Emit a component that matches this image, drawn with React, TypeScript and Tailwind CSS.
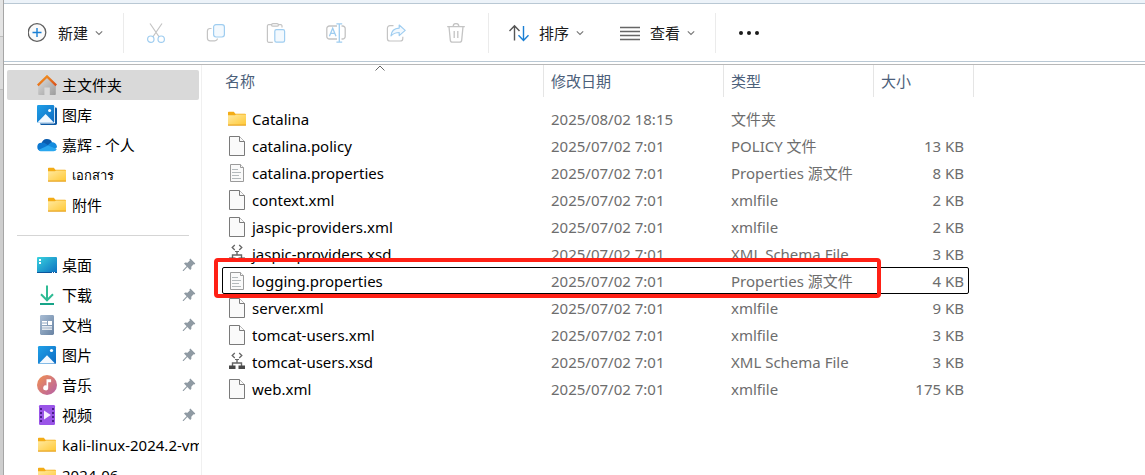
import type { ReactNode } from "react";

const Chevron = () => (
  <svg className="w-2 h-2 shrink-0" viewBox="0 0 8 8" fill="none" stroke="#777" strokeWidth="1.1">
    <path d="M0.8 2.3 4 5.5 7.2 2.3" />
  </svg>
);

const NewIcon = () => (
  <svg className="w-5 h-5 shrink-0" viewBox="0 0 20 20" fill="none">
    <circle cx="9" cy="9.5" r="8.8" fill="#fafafa" stroke="#5f5f5f" strokeWidth="1.3" />
    <path d="M9 5v9M4.5 9.5h9" stroke="#1a7fd4" strokeWidth="1.4" />
  </svg>
);

const CutIcon = () => (
  <svg className="w-5 h-5" viewBox="0 0 20 20" fill="none" strokeWidth="1.2">
    <path d="M4 0.5 13.2 14M16 0.5 6.8 14" stroke="#c4c4c4" />
    <circle cx="4.8" cy="16.2" r="3.2" stroke="#9fcdf0" />
    <circle cx="15.2" cy="16.2" r="3.2" stroke="#9fcdf0" />
  </svg>
);

const CopyIcon = () => (
  <svg className="w-5 h-5" viewBox="0 0 20 20" fill="none" strokeWidth="1.2">
    <path d="M5.5 5.5H4A2.6 2.6 0 0 0 1.4 8v7A2.8 2.8 0 0 0 4.2 17.8h4.6a2.8 2.8 0 0 0 2.7-2.3" stroke="#c4c4c4" />
    <rect x="7.6" y="1.6" width="10.8" height="12.4" rx="2.4" fill="#f3f9fe" stroke="#9fcdf0" />
  </svg>
);

const PasteIcon = () => (
  <svg className="w-5 h-5" viewBox="0 0 20 20" fill="none" strokeWidth="1.2">
    <path d="M6 1.7H2.6A1.2 1.2 0 0 0 1.4 3v15a1.3 1.3 0 0 0 1.2 1.3h4.2M12 1.7h2.8A1.2 1.2 0 0 1 16 3v1.4" stroke="#c4c4c4" />
    <rect x="5.6" y="0.6" width="6.8" height="2.6" rx="1.3" stroke="#c4c4c4" />
    <rect x="8.8" y="6.6" width="9.8" height="12.6" rx="1.6" fill="#f3f9fe" stroke="#9fcdf0" />
  </svg>
);

const RenameIcon = () => (
  <svg className="w-5 h-5" viewBox="0 0 20 20" fill="none" strokeWidth="1.3">
    <path d="M11 3H3.4A2.6 2.6 0 0 0 0.8 5.6v7.8A2.6 2.6 0 0 0 3.4 16H11M15.5 3h1.1a2.6 2.6 0 0 1 2.6 2.6v7.8a2.6 2.6 0 0 1-2.6 2.6h-1.1" stroke="#c4c4c4" />
    <path d="m3.4 13.2 3.3-8 3.3 8M4.7 10.4h4.1M13.3 0.8v18.4M10.4 0.8h5.8M10.4 19.2h5.8" stroke="#9fcdf0" />
  </svg>
);

const ShareIcon = () => (
  <svg className="w-5 h-5" viewBox="0 0 20 20" fill="none" strokeWidth="1.2" strokeLinejoin="round">
    <path d="M7.5 2.6H4A2.6 2.6 0 0 0 1.4 5.2v10.2A2.6 2.6 0 0 0 4 18h10.2a2.6 2.6 0 0 0 2.6-2.6v-1.6" stroke="#c4c4c4" />
    <path d="m13.2 2 6 5.4-6 5.2V9.5c-3.6 0-6 1-8.2 3.4.3-4.6 3.2-7.5 8.2-7.8V2Z" fill="#f3f9fe" stroke="#9fcdf0" />
  </svg>
);

const TrashIcon = () => (
  <svg className="w-5 h-5" viewBox="0 0 20 20" fill="none" stroke="#c4c4c4" strokeWidth="1.3">
    <path d="M1.2 3.6h17.6M7.2 3.4a2.8 2.8 0 0 1 5.6 0M3 3.8l1.3 13.3A2.3 2.3 0 0 0 6.6 19.2h6.8a2.3 2.3 0 0 0 2.3-2.1L17 3.8M8.2 8v7M11.8 8v7" />
  </svg>
);

const SortIcon = () => (
  <svg className="w-5 h-5 shrink-0" viewBox="0 0 20 20" fill="none" strokeWidth="1.4">
    <path d="M5.5 17.5V3M0.5 8l5-5.2 5 5.2" stroke="#555" />
    <path d="M14.5 3v14.5M9.5 12.3l5 5.2 5-5.2" stroke="#1a7fd4" />
  </svg>
);

const ViewIcon = () => (
  <svg className="w-5 h-5 shrink-0" viewBox="0 0 20 20" fill="none" stroke="#666" strokeWidth="1.3">
    <path d="M0 4.5h20M0 8.5h20M0 12.5h20M0 16.5h20" />
  </svg>
);

const FolderIcon = () => (
  <svg className="w-5 h-5 shrink-0" viewBox="0 0 20 20">
    <defs>
      <linearGradient id="folder" x1="0" y1="0" x2="1" y2="1">
        <stop offset="0" stopColor="#ffe9a0" />
        <stop offset="1" stopColor="#ffc937" />
      </linearGradient>
    </defs>
    <path d="M1 3.6a.8.8 0 0 1 .8-.8h5l1.6 2H18a1 1 0 0 1 1 1V9H1Z" fill="#f3ac17" />
    <path d="M1 6.2h7l1-.6h10V16H1Z" fill="url(#folder)" />
    <path d="M1 15.6h18v.6a.6.6 0 0 1-.6.6H1.6a.6.6 0 0 1-.6-.6Z" fill="#e9a624" />
  </svg>
);

const HomeIcon = () => (
  <svg className="w-5 h-5 shrink-0" viewBox="0 0 20 20">
    <defs>
      <linearGradient id="house" x1="0" y1="0" x2="1" y2="1">
        <stop offset="0" stopColor="#dedede" />
        <stop offset="1" stopColor="#9c9c9c" />
      </linearGradient>
      <linearGradient id="roof" x1="0" y1="0" x2="1" y2="1">
        <stop offset="0" stopColor="#f59a1f" />
        <stop offset="1" stopColor="#d94f1c" />
      </linearGradient>
    </defs>
    <path d="M1.2 10 10 1.5l8.8 8.5v9.2a.8.8 0 0 1-.8.8h-5.2v-7.5H7.4V20H2a.8.8 0 0 1-.8-.8Z" fill="url(#house)" />
    <path d="m.8 10.4 9.2-9 9.2 9" fill="none" stroke="url(#roof)" strokeWidth="2.3" />
  </svg>
);

const GalleryIcon = () => (
  <svg className="w-5 h-5 shrink-0" viewBox="0 0 20 20">
    <defs>
      <linearGradient id="photo" x1="0" y1="0" x2="1" y2="1">
        <stop offset="0" stopColor="#1fa0e8" />
        <stop offset="1" stopColor="#0f6cc2" />
      </linearGradient>
    </defs>
    <rect x="3" y="2.4" width="17" height="17.6" rx="1.4" fill="#0c59a4" />
    <rect x="0" y="0" width="18" height="18.4" rx="1.2" fill="#fff" />
    <rect x="0" y="0" width="17.2" height="17.6" rx="1.2" fill="url(#photo)" />
    <path d="M.6 17.3 8.6 9l8 8.3-.6.3H1Z" fill="#f1f8ff" />
    <circle cx="12.6" cy="5.4" r="1.5" fill="#fff" />
  </svg>
);

const CloudIcon = () => (
  <svg className="w-5 h-5 shrink-0" viewBox="0 0 20 20">
    <path d="M4.6 8a5.6 5.6 0 0 1 10.5-.8L11 13 4 9Z" fill="#0a5cae" />
    <path d="M4.2 16A4.1 4.1 0 0 1 4.6 7.8c2-.5 3.3.2 4.6 1.1l4 3L9 16Z" fill="#0d78d1" />
    <path d="m8.4 12.4 5.4-5c3.3-.5 6.2 1.6 6.2 4.9L18 14Z" fill="#158cde" />
    <path d="M1.8 14.8 11 10.6l8.8 3.3a3.5 3.5 0 0 1-3.2 2.4H4.2c-1 0-1.8-.5-2.4-1.5Z" fill="#2aa7ef" />
  </svg>
);

const DesktopIcon = () => (
  <svg className="w-5 h-5 shrink-0" viewBox="0 0 20 20">
    <defs>
      <linearGradient id="desk" x1="0" y1="0" x2="1" y2="1">
        <stop offset="0" stopColor="#39d3df" />
        <stop offset="1" stopColor="#0c6fc0" />
      </linearGradient>
    </defs>
    <rect x="0" y="2" width="20" height="16" rx="1" fill="url(#desk)" />
    <path d="M0 17h20v.4a.6.6 0 0 1-.6.6H.6a.6.6 0 0 1-.6-.6Z" fill="#0b559c" />
    <path d="M2 4h2v2H2zM2 7h2v2H2zM15 17h1v1h-1zM17 17h1v1h-1z" fill="#fff" />
  </svg>
);

const DownloadIcon = () => (
  <svg className="w-5 h-5 shrink-0" viewBox="0 0 20 20" fill="none" strokeWidth="2">
    <path d="M10 .5V15M4 9.3l6 6 6-6" stroke="#2fbb94" />
    <path d="M3 19h14" stroke="#16a488" />
  </svg>
);

const DocumentIcon = () => (
  <svg className="w-5 h-5 shrink-0" viewBox="0 0 20 20">
    <defs>
      <linearGradient id="doc" x1="0" y1="0" x2="1" y2="1">
        <stop offset="0" stopColor="#a9bdd4" />
        <stop offset="1" stopColor="#6883a3" />
      </linearGradient>
    </defs>
    <rect x="3" y="0" width="14" height="20" rx="1.4" fill="url(#doc)" />
    <path d="M5 6h5v1.4H5zM5 8.600h5V10H5zM11 6h4v4h-4zM5 11.200h10v1.200H5zM5 13.600h10v1.200H5z" fill="#fff" />
  </svg>
);

const PictureIcon = () => (
  <svg className="w-5 h-5 shrink-0" viewBox="0 0 20 20">
    <rect x="1" y="1" width="18" height="18" rx="1.2" fill="url(#photo)" />
    <path d="m2 18.600 8-8.400 8 8.400Z" fill="#f3f9ff" />
    <circle cx="14.500" cy="5.500" r="1.600" fill="#fff" />
  </svg>
);

const MusicIcon = () => (
  <svg className="w-5 h-5 shrink-0" viewBox="0 0 20 20">
    <defs>
      <linearGradient id="music" x1="0" y1="0" x2="1" y2="1">
        <stop offset="0" stopColor="#f29150" />
        <stop offset="1" stopColor="#b45fa8" />
      </linearGradient>
    </defs>
    <circle cx="10" cy="10" r="10" fill="url(#music)" />
    <path d="M9.500 4.200h4.600v3h-2.900v5.600a2.500 2.500 0 1 1-1.700-2.300Z" fill="#fff" />
  </svg>
);

const VideoIcon = () => (
  <svg className="w-5 h-5 shrink-0" viewBox="0 0 20 20">
    <rect x="2" y="0" width="16" height="20" rx="1.2" fill="#9a55e8" />
    <path d="M3 3h2v2H3zM3 7h2v2H3zM3 11h2v2H3zM3 15h2v2H3zM15 3h2v2h-2zM15 7h2v2h-2zM15 11h2v2h-2zM15 15h2v2h-2z" fill="#4b1f8c" />
    <path d="m7 5.600 6.800 4.400L7 14.400Z" fill="#f7eeff" />
  </svg>
);

const PinIcon = () => (
  <svg className="w-[14px] h-[14px] shrink-0" viewBox="0 0 14 14">
    <path d="m8.300.600 5 5-.9.900-.8-.2-2.300 2.400.100 2.100-1.200 1.200-2.900-2.900L1.600 13H.8v-.8l3.800-3.900L2 5.600l1.200-1.100 2.300.2L7.800 2.400l-.3-.9Z" fill="#8f9aa3" />
  </svg>
);

const BlankFileIcon = () => (
  <svg className="w-5 h-5 shrink-0" viewBox="0 0 20 20" fill="#fafafa" stroke="#7a7a7a">
    <path d="M2.500.500h10l5 5v14h-15Z" />
    <path d="M12.500.500v5h5" />
  </svg>
);

const TextFileIcon = () => (
  <svg className="w-5 h-5 shrink-0" viewBox="0 0 20 20" fill="#fafafa" stroke="#9b9b9b">
    <path d="M3.500 1.500h10l3 3v14h-13Z" />
    <path d="M13.500 1.500v3h3" />
    <path d="M5 6.500h6M5 9.500h9M5 12.500h7M5 15.500h9" stroke="#b4babc" />
  </svg>
);

const SchemaIcon = () => (
  <svg className="w-5 h-5 shrink-0" viewBox="0 0 20 20" fill="none" stroke="#666">
    <path d="m7.800 1-2.600 2.500L7.800 6M12.200 1l2.600 2.500L12.200 6" strokeWidth="1.3" />
    <path d="M10 7v4M5.500 14v-3h9v3" strokeWidth="1.4" />
    <path d="M8 7.500h4" />
    <path d="M2 13.500h6.500V17H2zM11.500 13.500H18V17h-6.500z" fill="#484848" stroke="none" />
  </svg>
);

const ToolbarMenu = ({ icon, label }: { icon: ReactNode; label: string }) => (
  <button type="button" className="flex items-center px-[18px] h-10">
    {icon}
    <span className="ml-[10px] mr-[7px]">{label}</span>
    <Chevron />
  </button>
);

const Divider = () => <div className="w-px h-10 mx-[2px] bg-[#ebebeb]" />;

const editActions = [
  { label: "剪切", icon: <CutIcon /> },
  { label: "复制", icon: <CopyIcon /> },
  { label: "粘贴", icon: <PasteIcon /> },
  { label: "重命名", icon: <RenameIcon /> },
  { label: "共享", icon: <ShareIcon /> },
  { label: "删除", icon: <TrashIcon /> },
];

const Toolbar = () => (
  <div className="flex items-center h-[58px] shrink-0 pl-[6px] border-b border-[#b9c8d4] text-[#1b1b1b]">
    <ToolbarMenu icon={<NewIcon />} label="新建" />
    <Divider />
    {editActions.map((action) => (
      <button key={action.label} type="button" disabled aria-label={action.label} className="flex items-center justify-center w-[60px] h-10">
        {action.icon}
      </button>
    ))}
    <Divider />
    <ToolbarMenu icon={<SortIcon />} label="排序" />
    <ToolbarMenu icon={<ViewIcon />} label="查看" />
    <Divider />
    <button type="button" aria-label="更多" className="flex items-center px-[18px] h-10">
      <svg className="w-6 h-5" viewBox="0 0 24 20" fill="#1b1b1b">
        <circle cx="5" cy="10" r="2" />
        <circle cx="13" cy="10" r="2" />
        <circle cx="21" cy="10" r="2" />
      </svg>
    </button>
  </div>
);

type NavItemProps = { icon: ReactNode; label: string; active?: boolean; nested?: boolean; pinned?: boolean; small?: boolean };

const NavItem = ({ icon, label, active, nested, pinned, small }: NavItemProps) => (
  <li>
    <a
      href="#"
      className={`flex items-center h-[30px] gap-[5px] rounded-xs overflow-hidden whitespace-nowrap ${nested ? "pl-10" : "pl-[30px]"} ${active ? "bg-[#d9d9d9]" : ""}`}
    >
      {icon}
      <span className={`flex-1 min-w-0 overflow-hidden ${small ? "text-[13px]" : ""}`}>{label}</span>
      {pinned && <span className="pr-[3px]"><PinIcon /></span>}
    </a>
  </li>
);

const Sidebar = () => (
  <nav className="w-[198px] shrink-0 pt-[5px] pl-[3px] pr-[2px] border-r border-[#f0f0f0] overflow-hidden text-black">
    <ul>
      <NavItem icon={<HomeIcon />} label="主文件夹" active />
      <NavItem icon={<GalleryIcon />} label="图库" />
      <NavItem icon={<CloudIcon />} label="嘉辉 - 个人" />
      <NavItem icon={<FolderIcon />} label="เอกสาร" nested small />
      <NavItem icon={<FolderIcon />} label="附件" nested />
    </ul>
    <hr className="mt-[15px] mb-[14px] mx-[10px] border-[#d5d5d5]" />
    <ul>
      <NavItem icon={<DesktopIcon />} label="桌面" pinned />
      <NavItem icon={<DownloadIcon />} label="下载" pinned />
      <NavItem icon={<DocumentIcon />} label="文档" pinned />
      <NavItem icon={<PictureIcon />} label="图片" pinned />
      <NavItem icon={<MusicIcon />} label="音乐" pinned />
      <NavItem icon={<VideoIcon />} label="视频" pinned />
      <NavItem icon={<FolderIcon />} label="kali-linux-2024.2-vm" />
      <NavItem icon={<FolderIcon />} label="2024-06" />
    </ul>
  </nav>
);

const files = [
  { name: "Catalina", date: "2025/08/02 18:15", type: "文件夹", size: "", icon: <FolderIcon /> },
  { name: "catalina.policy", date: "2025/07/02 7:01", type: "POLICY 文件", size: "13 KB", icon: <BlankFileIcon /> },
  { name: "catalina.properties", date: "2025/07/02 7:01", type: "Properties 源文件", size: "8 KB", icon: <TextFileIcon /> },
  { name: "context.xml", date: "2025/07/02 7:01", type: "xmlfile", size: "2 KB", icon: <BlankFileIcon /> },
  { name: "jaspic-providers.xml", date: "2025/07/02 7:01", type: "xmlfile", size: "2 KB", icon: <BlankFileIcon /> },
  { name: "jaspic-providers.xsd", date: "2025/07/02 7:01", type: "XML Schema File", size: "3 KB", icon: <SchemaIcon /> },
  { name: "logging.properties", date: "2025/07/02 7:01", type: "Properties 源文件", size: "4 KB", icon: <TextFileIcon />, focused: true },
  { name: "server.xml", date: "2025/07/02 7:01", type: "xmlfile", size: "9 KB", icon: <BlankFileIcon /> },
  { name: "tomcat-users.xml", date: "2025/07/02 7:01", type: "xmlfile", size: "3 KB", icon: <BlankFileIcon /> },
  { name: "tomcat-users.xsd", date: "2025/07/02 7:01", type: "XML Schema File", size: "3 KB", icon: <SchemaIcon /> },
  { name: "web.xml", date: "2025/07/02 7:01", type: "xmlfile", size: "175 KB", icon: <BlankFileIcon /> },
];

const columns = [
  { label: "名称", width: "w-[322px]", pad: "pl-[3px]", sorted: true },
  { label: "修改日期", width: "w-[180px]", pad: "pl-[7px]" },
  { label: "类型", width: "w-[150px]", pad: "pl-[7px]" },
  { label: "大小", width: "w-[100px]", pad: "pl-[7px]" },
];

const FileTable = () => (
  <table className="table-fixed w-[752px] ml-5 border-collapse">
    <thead>
      <tr>
        {columns.map((col) => (
          <th key={col.label} className={`${col.width} h-10 p-0 align-top font-normal text-left text-[#4c607a]`}>
            <button type="button" className={`relative flex items-center w-full h-8 border-r border-[#e5e5e5] ${col.pad}`}>
              {col.label}
              {col.sorted && (
                <svg className="absolute top-0 left-[153px] w-[10px] h-[6px]" viewBox="0 0 10 6" fill="none" stroke="#666">
                  <path d="M.5 5.500 5 1l4.500 4.500" />
                </svg>
              )}
            </button>
          </th>
        ))}
      </tr>
    </thead>
    <tbody className="text-[#6d6d6d]">
      {files.map((file) => (
        <tr key={file.name} className="relative h-[27px]">
          <td className="p-0">
            <div className="flex items-center gap-[5px] pl-[5px] text-black">
              {file.icon}
              {file.name}
            </div>
          </td>
          <td className="p-0 pl-[7px]">{file.date}</td>
          <td className="p-0 pl-[7px] whitespace-nowrap">{file.type}</td>
          <td className="p-0 pr-[10px] text-right">
            {file.size}
            {file.focused && (
              <>
                <span className="absolute inset-y-0 left-0 right-[5px] border border-black rounded-xs" />
                <span className="absolute -top-[9px] -bottom-1 -left-2 right-[93px] border-4 border-[#ff2015] rounded" />
              </>
            )}
          </td>
        </tr>
      ))}
    </tbody>
  </table>
);

export default function App() {
  return (
    <div className="flex h-screen overflow-hidden bg-white text-[15px] leading-5 font-['Noto_Sans','Noto_Sans_CJK_SC',sans-serif]">
      <div className="w-1 shrink-0 bg-[#cecece] border-r border-[#a6a6a6]">
        <div className="h-[37px] bg-[#e4e4e4] border-b border-[#bdbdbd]" />
        <div className="h-[53px] bg-[#dcdcdc] border-b border-[#bdbdbd]" />
      </div>
      <div className="flex flex-col flex-1 min-w-0">
        <div className="h-1 shrink-0 bg-[#edf3f9] border-b border-[#b9c8d4]" />
        <Toolbar />
        <div className="flex flex-1 min-h-0 mt-[2px] border-t border-[#b8b8b8]">
          <Sidebar />
          <main className="flex-1 min-w-0 overflow-hidden">
            <FileTable />
          </main>
        </div>
      </div>
    </div>
  );
}
